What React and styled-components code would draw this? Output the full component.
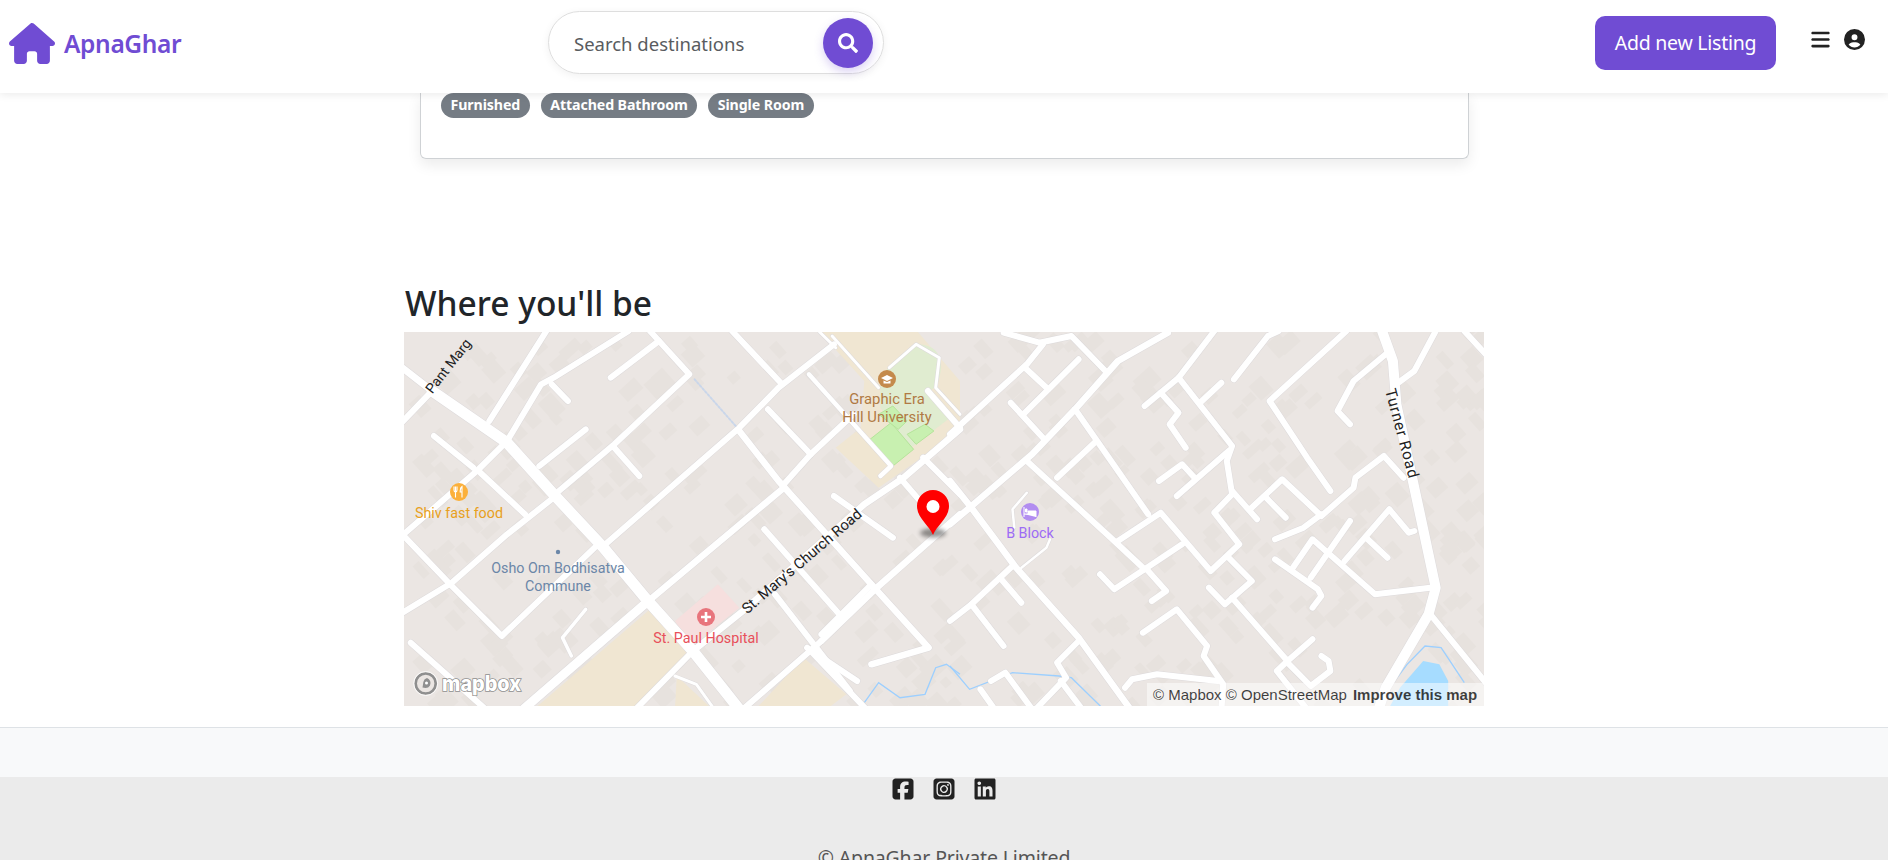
import React from "react";
import styled, { createGlobalStyle } from "styled-components";
import { FaSearch } from "react-icons/fa";
import {
  FaHouse,
  FaBars,
  FaCircleUser,
  FaSquareFacebook,
  FaSquareInstagram,
  FaLinkedin,
} from "react-icons/fa6";

const Global = createGlobalStyle`
  html, body { margin: 0; padding: 0; height: 860px; overflow: hidden; background: #fff; }
  body { font-family: "Noto Sans", "Open Sans", sans-serif; color: #212529; }
  * { box-sizing: border-box; }
`;

const Page = styled.div`
  height: 860px;
  overflow: hidden;
  display: flex;
  flex-direction: column;
`;
const Nav = styled.nav`
  position: relative;
  z-index: 2;
  height: 93px;
  flex: none;
  background: #fff;
  box-shadow: 0 2px 8px rgba(0, 0, 0, 0.08);
  display: flex;
  align-items: center;
  padding: 0 23px 0 9px;
`;
const Brand = styled.a`
  display: flex;
  align-items: center;
  gap: 9px;
  width: 539px;
  margin-top: -7px;
  color: #704cd3;
  font-size: 24.5px;
  font-weight: 600;
  letter-spacing: -0.35px;
`;
const HouseIcon = styled(FaHouse)`
  width: 46px;
  height: 41px;
`;
const SearchPill = styled.form`
  width: 336px;
  height: 63px;
  margin-top: -8px;
  border: 1px solid #dedede;
  border-radius: 32px;
  box-shadow: 0 2px 8px rgba(0, 0, 0, 0.06);
  display: flex;
  align-items: center;
  padding: 0 10px 0 25px;
`;
const SearchInput = styled.input`
  flex: 1;
  min-width: 0;
  border: 0;
  outline: 0;
  background: none;
  font: inherit;
  font-size: 18.5px;
  padding: 1px 0 0;
  color: #595c5f;
  &::placeholder { color: #595c5f; opacity: 1; }
`;
const SearchButton = styled.button`
  flex: none;
  width: 50px;
  height: 50px;
  border: 0;
  border-radius: 50%;
  background: #704cd3;
  color: #fff;
  display: flex;
  align-items: center;
  justify-content: center;
  box-shadow: 0 4px 10px rgba(112, 76, 211, 0.25);
  font-size: 20px;
`;
const NavRight = styled.div`
  margin-left: auto;
  display: flex;
  align-items: center;
  margin-top: -8px;
`;
const AddButton = styled.button`
  width: 181px;
  height: 54px;
  border: 0;
  border-radius: 10px;
  background: #704cd3;
  color: #fff;
  font: inherit;
  font-size: 19.5px;
  letter-spacing: -0.25px;
`;
const MenuIcons = styled.div`
  display: flex;
  align-items: center;
  gap: 13px;
  margin: -6px 0 0 34px;
  color: #222;
  font-size: 21px;
`;
const Card = styled.section`
  flex: none;
  width: 1049px;
  height: 66px;
  margin-left: 420px;
  border: 1px solid #cfd2d5;
  border-top: 0;
  border-radius: 0 0 6px 6px;
  box-shadow: 0 6px 14px rgba(0, 0, 0, 0.08);
  padding: 0 20px;
  display: flex;
  align-items: flex-start;
  gap: 11px;
`;
const Tag = styled.span`
  height: 25px;
  padding: 0 9.5px;
  border-radius: 12.5px;
  background: #757c84;
  color: #fff;
  font-size: 14.2px;
  font-weight: 700;
  line-height: 24px;
  letter-spacing: -0.1px;
  white-space: nowrap;
`;
const MapSection = styled.section`
  flex: none;
  width: 1080px;
  margin: 124px 0 0 404px;
`;
const Heading = styled.h2`
  margin: 0 0 9px 1px;
  font-size: 33.5px;
  font-weight: 500;
  line-height: 40px;
  color: #212529;
`;
const MapFrame = styled.div`
  position: relative;
  width: 1080px;
  height: 374px;
  overflow: hidden;
  background: #ebe6e3;
`;
const MapSvg = styled.svg`
  display: block;
  width: 1080px;
  height: 374px;
`;
const Attribution = styled.div`
  position: absolute;
  right: 0;
  bottom: 0;
  height: 23px;
  width: 337px;
  background: rgba(255, 255, 255, 0.5);
  font-family: "Liberation Sans", Arial, sans-serif;
  font-size: 15px;
  line-height: 23px;
  color: rgba(0, 0, 0, 0.75);
  padding-left: 6px;
  white-space: nowrap;
  display: flex;
  gap: 6px;
`;
const Improve = styled.b`
  color: rgba(0, 0, 0, 0.75);
`;
const FooterStrip = styled.div`
  flex: none;
  height: 50px;
  margin-top: 21px;
  background: #f8f9fa;
  border-top: 1px solid #dee2e6;
`;
const Footer = styled.footer`
  flex: 1;
  background: #ebebeb;
  display: flex;
  flex-direction: column;
  align-items: center;
`;
const Socials = styled.div`
  display: flex;
  gap: 17px;
  font-size: 24px;
  color: #222;
  height: 24px;
`;
const Copy = styled.div`
  margin-top: 44px;
  font-size: 19.5px;
  line-height: 26px;
  letter-spacing: -0.15px;
  color: #555;
  white-space: nowrap;
`;

const z3 = (p) => { const o = []; for (let i = 0; i < p.length; i += 2) o.push(`${(400 + p[i] / 2.8).toFixed(1)},${(280 + p[i + 1] / 3).toFixed(1)}`); return o.join(" "); };
const z4 = (p) => { const o = []; for (let i = 0; i < p.length; i += 2) o.push(`${(950 + p[i] / 2.8).toFixed(1)},${(320 + p[i + 1] / 3).toFixed(1)}`); return o.join(" "); };

const ROADS3 = [
  [11, [90,330,300,485,430,640,570,800,690,955,820,1110,950,1285]],
  [7, [0,255,90,330]],
  [9, [345,1285,690,965]],
  [6.5, [690,965,1075,620]],
  [6.5, [820,1110,960,990,1300,670,1410,590,1568,445]],
  [6, [410,150,250,420]],
  [6, [0,430,85,335]],
  [6, [640,150,430,290,395,310,300,480,215,570,10,760]],
  [6, [725,180,590,290]],
  [6, [700,150,810,280,600,490,445,630]],
  [6, [520,445,390,555]],
  [6, [425,310,470,360]],
  [6, [95,465,205,560]],
  [6, [225,575,350,700]],
  [6, [430,650,300,760,145,905,0,1000]],
  [6, [15,770,145,915,285,1065,545,800]],
  [6, [600,500,670,585]],
  [6, [1215,190,1060,320,950,440,575,790]],
  [6, [930,150,1070,310]],
  [6.5, [950,450,1060,600,1320,910,1480,1100,1320,1150]],
  [6, [1030,385,1150,520]],
  [6, [1075,610,1150,520,1270,400]],
  [6.5, [1180,1080,1330,925,1568,700]],
  [6, [1215,645,1380,770]],
  [6, [1020,745,1230,1000]],
  [6, [1050,940,1260,1230]],
  [6, [1140,1100,1280,1200]],
  [6, [30,1085,240,1285]],
  [6, [820,1110,660,1285]],
  [6, [1180,1080,960,1285]],
  [4.5, [1145,280,1375,555,1345,585]],
  [6, [1478,330,1568,440]],
  [6, [1465,530,1568,640]],
  [6, [1400,590,1480,690]],
  [6, [1320,910,1180,1060]],
  [6, [1150,1110,1310,1290]],
  [3, [1210,165,1340,320]],
  [3, [1370,260,1445,190,1510,230,1500,320,1568,400]],
  [3, [1175,153,1220,200]],
  [3.5, [520,985,455,1070,480,1125]],
  [3, [770,1185,830,1210,880,1285]],
];
const ROADS4 = [
  [6, [260,70,215,130,0,340]],
  [6, [150,35,250,65,340,45,435,150]],
  [6, [360,115,205,280]],
  [6, [210,140,275,205]],
  [6.5, [610,35,470,120,350,265,230,400,55,560,0,610]],
  [6, [170,245,260,350]],
  [6, [350,265,555,580]],
  [6, [410,360,300,470]],
  [6, [215,420,460,660,545,745,650,670]],
  [6, [470,660,590,575,730,750,810,670,740,575,790,520,775,420,790,375,640,170,545,255]],
  [6, [740,30,640,170]],
  [6, [780,390,635,525]],
  [6, [585,480,650,430,685,470]],
  [6, [590,215,640,275,615,310,660,380]],
  [6, [700,245,760,185]],
  [6, [795,175,890,45,920,30]],
  [6, [1110,30,895,240,1000,410,1065,510]],
  [6, [1225,95,1130,180,1085,270,1120,310]],
  [10, [1210,30,1240,120,1250,250,1300,500,1360,800,1340,880,1220,1100,1200,1165]],
  [6, [1360,30,1300,150,1255,185]],
  [6, [1440,30,1500,100]],
  [6, [790,510,860,595]],
  [6, [840,565,930,475,1040,585,1130,500,1135,470,1215,405,1270,470]],
  [6, [885,530,940,590]],
  [6, [910,655,990,620,1040,580]],
  [6, [1120,600,1010,770]],
  [6, [910,715,1030,805,1040,825,1015,860]],
  [6, [960,740,1015,655,1190,820,1345,800]],
  [6, [1105,720,1230,565,1285,635,1300,630]],
  [6, [1165,650,1225,710]],
  [6, [1345,880,1500,1085]],
  [6, [780,710,845,780,770,850,725,800]],
  [6, [790,830,945,1020,1015,955]],
  [6, [945,1020,915,1050,1000,1165]],
  [6, [945,1025,1010,1095,1065,1050,1060,1020,1040,1005]],
  [6, [540,935,635,865,720,975,710,1005,765,1090,760,1165]],
  [6, [555,750,605,810,565,840]],
  [6, [420,760,460,805,545,745]],
  [6.5, [0,480,60,560,185,740,360,950,505,1165]],
  [6, [60,850,150,975]],
  [6, [0,900,60,850,175,735]],
  [6, [140,770,200,845]],
  [6, [360,960,300,1025,325,1070,240,1165]],
  [6, [310,1080,370,1165]],
  [6, [115,1080,155,1055,230,1165]],
  [6, [85,1105,125,1165]],
  [6, [490,1100,510,1075,580,1060,750,1080]],
  [2.5, [215,515,175,565,180,620]],
  [2.5, [280,655,270,680,200,740]],
];

const rand = (seed) => { let s = seed; return () => { s = (s * 16807) % 2147483647; return s / 2147483647; }; };
const BUILDINGS = (() => {
  const r = rand(4242);
  const out = [];
  for (let i = 0; i < 520; i++) {
    out.push({
      x: 404 + r() * 1080,
      y: 331 + r() * 374,
      w: 9 + r() * 14,
      h: 8 + r() * 10,
      a: r() > 0.5 ? -42 : 48,
    });
  }
  return out;
})();

const MapArt = () => (
  <MapSvg viewBox="404 331 1080 374">
    <rect x="404" y="331" width="1080" height="374" fill="#ebe6e3" />
    {BUILDINGS.map((b, i) => (
      <rect key={i} x={b.x} y={b.y} width={b.w} height={b.h} fill="#e7e2de" transform={`rotate(${b.a} ${b.x} ${b.y})`} />
    ))}
    <polygon points={z3([1175,153,1450,153,1568,300,1568,420,1500,500,1340,620,1220,500,1290,440,1300,300])} fill="#f0e6d2" />
    <polygon points={z3([380,1280,700,985,820,1110,660,1280])} fill="#f0e6d2" />
    <polygon points={z3([770,1280,775,1185,870,1280])} fill="#f0e6d2" />
    <polygon points={z3([1000,1280,1130,1130,1250,1240,1200,1280])} fill="#f0e6d2" />
    <polygon points={z3([770,1020,890,910,950,980,810,1100])} fill="#f6dfde" />
    <path d={`M${z3([1345,300])}Q${z3([1370,240])} ${z3([1445,190])}Q${z3([1515,190])} ${z3([1515,260])}Q${z3([1510,320])} ${z3([1480,330])}L${z3([1535,415])}L${z3([1430,500])}L${z3([1345,380])}Z`} fill="#e0ecd0" />
    <polygon points={z3([1310,480,1375,425,1438,505,1380,555])} fill="#c8f0b0" stroke="#b5e49a" />
    <polygon points={z3([1340,400,1380,375,1420,420,1395,445])} fill="#c8f0b0" stroke="#b5e49a" />
    <polygon points={z3([1420,460,1470,430,1495,450,1445,490])} fill="#c8f0b0" stroke="#b5e49a" />
    <polygon points={z4([1260,1100,1325,1020,1370,1030,1395,1080,1395,1170,1225,1170])} fill="#a6dcff" />
    <g fill="none" stroke="#9ccfff" strokeWidth="1.3">
      <polyline points={z3([1290,1280,1340,1205,1400,1250,1470,1240,1500,1160,1530,1150,1568,1180])} />
      <polyline points={z4([0,1035,55,1105,175,1055,305,1065,340,1070,430,1165])} />
      <polyline points={z4([1210,1130,1280,1030,1330,975,1375,980,1440,1085])} />
    </g>
    <g fill="none" strokeLinecap="round" strokeLinejoin="round">
      {ROADS3.map(([w, p], i) => <polyline key={`a${i}`} points={z3(p)} stroke="#dddadb" strokeWidth={w + 1} />)}
      {ROADS4.map(([w, p], i) => <polyline key={`b${i}`} points={z4(p)} stroke="#dddadb" strokeWidth={w + 1} />)}
      {ROADS3.map(([w, p], i) => <polyline key={`c${i}`} points={z3(p)} stroke="#fff" strokeWidth={w} />)}
      {ROADS4.map(([w, p], i) => <polyline key={`d${i}`} points={z4(p)} stroke="#fff" strokeWidth={w} />)}
      <polyline points={z3([825,295,940,435])} stroke="#c9d6ea" strokeWidth="2" strokeDasharray="2 2" />
    </g>
    <g fontFamily="Roboto, sans-serif" fontSize="14.3" textAnchor="middle">
      <text transform="translate(452 368) rotate(-52)" fill="#222" fontSize="14">Pant Marg</text>
      <text x="887" y="403" fill="#b07a44" fontSize="14.8">Graphic Era</text>
      <text x="887" y="421" fill="#b07a44" fontSize="14.8">Hill University</text>
      <text x="459" y="517" fill="#e8a020">Shiv fast food</text>
      <text x="558" y="572" fill="#6b87a8">Osho Om Bodhisatva</text>
      <text x="558" y="590" fill="#6b87a8">Commune</text>
      <text x="706" y="642" fill="#e8505b">St. Paul Hospital</text>
      <text x="1030" y="537" fill="#9d6cf5">B Block</text>
      <text transform="translate(805 564) rotate(-40.5)" fill="#222" fontSize="14.8">St. Mary's Church Road</text>
      <text transform="translate(1397 434) rotate(75)" fill="#222" fontSize="15.5" letterSpacing="0.8">Turner Road</text>
    </g>
    <circle cx="887" cy="378" r="9" fill="#c48a4c" />
    <path d="M881 377l6-3 6 3-6 3zM883.5 379.5v3h7v-3l-3.500 1.500z" fill="#fff" />
    <circle cx="459" cy="491" r="9" fill="#fbb03b" />
    <path d="M455.500 485.500v5.500M454 485.500v3.500q0 2 1.500 2t1.500-2v-3.500M455.500 491v5.500M462 485.500q-1.800 1-1.800 4.500v1h1.800zM462 491v5.500" stroke="#fff" strokeWidth="1.100" fill="none" />
    <circle cx="558" cy="551" r="2.200" fill="#6b87a8" />
    <circle cx="706" cy="616" r="9" fill="#e8747c" />
    <path d="M704.700 611h2.600v3.700h3.700v2.600h-3.700v3.700h-2.600v-3.700h-3.700v-2.600h3.700z" fill="#fff" />
    <circle cx="1030" cy="511" r="9" fill="#b28df0" />
    <path d="M1024 506v10M1024 513h12v3M1027 508h-1.500v3h1.500zM1028 510h8v3h-8z" stroke="#fff" strokeWidth="1" fill="#fff" />
    <defs>
      <filter id="pinBlur" x="-50%" y="-100%" width="200%" height="300%">
        <feGaussianBlur stdDeviation="2" />
      </filter>
    </defs>
    <ellipse cx="933" cy="532" rx="13" ry="4.500" fill="#000" opacity="0.4" filter="url(#pinBlur)" />
    <path d="M933 534C929 524 917 517 917 505a16 16 0 0 1 32 0C949 517 937 524 933 534z" fill="#f00" />
    <circle cx="933" cy="505.500" r="6.500" fill="#fff" />
    <circle cx="425.700" cy="682.500" r="10" fill="#ebe6e3" fillOpacity="0.7" stroke="#8f8f8f" strokeWidth="2.600" />
    <circle cx="425.700" cy="682.500" r="12" fill="none" stroke="#fff" strokeOpacity="0.8" />
    <path d="M427 677a5.500 5.500 0 0 1 3 7.500q-1.500 2.500-4.500 2.500l-3-.5.5-3q.2-3 1.500-5 1-1 2.500-1.500z" fill="#8f8f8f" />
    <circle cx="426.500" cy="682" r="1.500" fill="#fff" />
    <text x="442" y="689.500" fontFamily="Inter, sans-serif" fontWeight="800" fontSize="21" fill="#fff" stroke="#8f8f8f" strokeWidth="1.600" paintOrder="stroke" textLength="79" lengthAdjust="spacingAndGlyphs">mapbox</text>
  </MapSvg>
);

export default function App() {
  return (
    <Page>
      <Global />
      <Nav>
        <Brand>
          <HouseIcon />
          ApnaGhar
        </Brand>
        <SearchPill>
          <SearchInput placeholder="Search destinations" />
          <SearchButton type="button" aria-label="Search">
            <FaSearch />
          </SearchButton>
        </SearchPill>
        <NavRight>
          <AddButton>Add new Listing</AddButton>
          <MenuIcons>
            <FaBars />
            <FaCircleUser />
          </MenuIcons>
        </NavRight>
      </Nav>
      <Card>
        <Tag>Furnished</Tag>
        <Tag>Attached Bathroom</Tag>
        <Tag>Single Room</Tag>
      </Card>
      <MapSection>
        <Heading>Where you'll be</Heading>
        <MapFrame>
          <MapArt />
          <Attribution>
            <span>© Mapbox © OpenStreetMap</span>
            <Improve>Improve this map</Improve>
          </Attribution>
        </MapFrame>
      </MapSection>
      <FooterStrip />
      <Footer>
        <Socials>
          <FaSquareFacebook />
          <FaSquareInstagram />
          <FaLinkedin />
        </Socials>
        <Copy>© ApnaGhar Private Limited</Copy>
      </Footer>
    </Page>
  );
}
